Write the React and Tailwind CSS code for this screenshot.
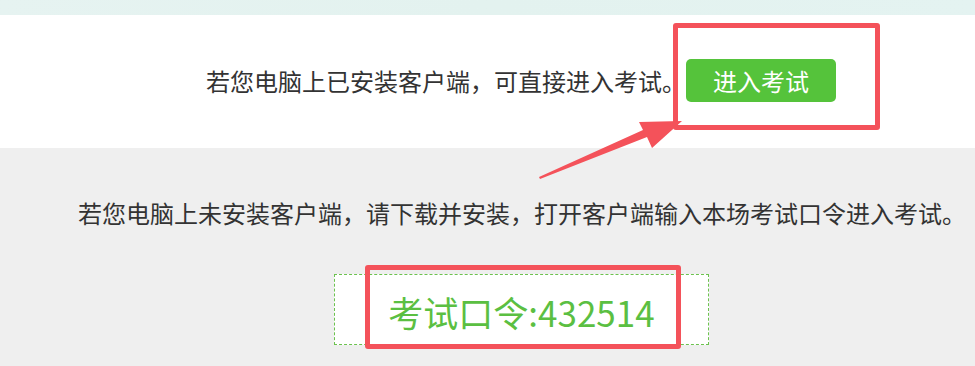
export default function App() {
  const font = { fontFamily: '"Noto Sans CJK SC", "Noto Sans", sans-serif' };
  return (
    <div className="relative w-[975px] h-[366px] overflow-hidden bg-[#efefef]" style={font}>
      <div className="h-[15px] bg-gradient-to-r from-[#e6f3f1] via-[#e3f2ef] to-[#e4f3f1]" />
      <div className="h-[133px] bg-white flex items-center pl-[206px] pb-[2px]">
        <span className="text-[24px] leading-none text-[#333333] whitespace-nowrap">若您电脑上已安装客户端，可直接进入考试。</span>
        <button className="ml-[0px] w-[150px] h-[43px] rounded-[5px] bg-[#55c33b] text-white text-[24px] leading-none flex items-center justify-center shrink-0">
          进入考试
        </button>
      </div>
      <div className="pt-[53px] pl-[78px]">
        <p className="text-[24px] leading-none text-[#333333] whitespace-nowrap">若您电脑上未安装客户端，请下载并安装，打开客户端输入本场考试口令进入考试。</p>
      </div>
      <div className="mt-[49px] ml-[334px] w-[375px] h-[71px] border border-dashed border-[#6cc24f] bg-white flex items-center justify-center">
        <span className="text-[35px] leading-none text-[#5bbf42] pt-[4px]">考试口令:432514</span>
      </div>
      <div className="absolute left-[673px] top-[23px] w-[207px] h-[107px] border-[5px] border-[#f4525a] rounded-[3px] pointer-events-none" />
      <div className="absolute left-[365px] top-[265px] w-[316px] h-[84px] border-[5px] border-[#f4525a] rounded-[3px] pointer-events-none" />
      <svg className="absolute left-0 top-0 pointer-events-none" width="975" height="366" viewBox="0 0 975 366">
        <polygon points="539,177 643,130 639,122 682,121 652,148 647,137 540,179" fill="#f4525a" />
      </svg>
    </div>
  );
}
